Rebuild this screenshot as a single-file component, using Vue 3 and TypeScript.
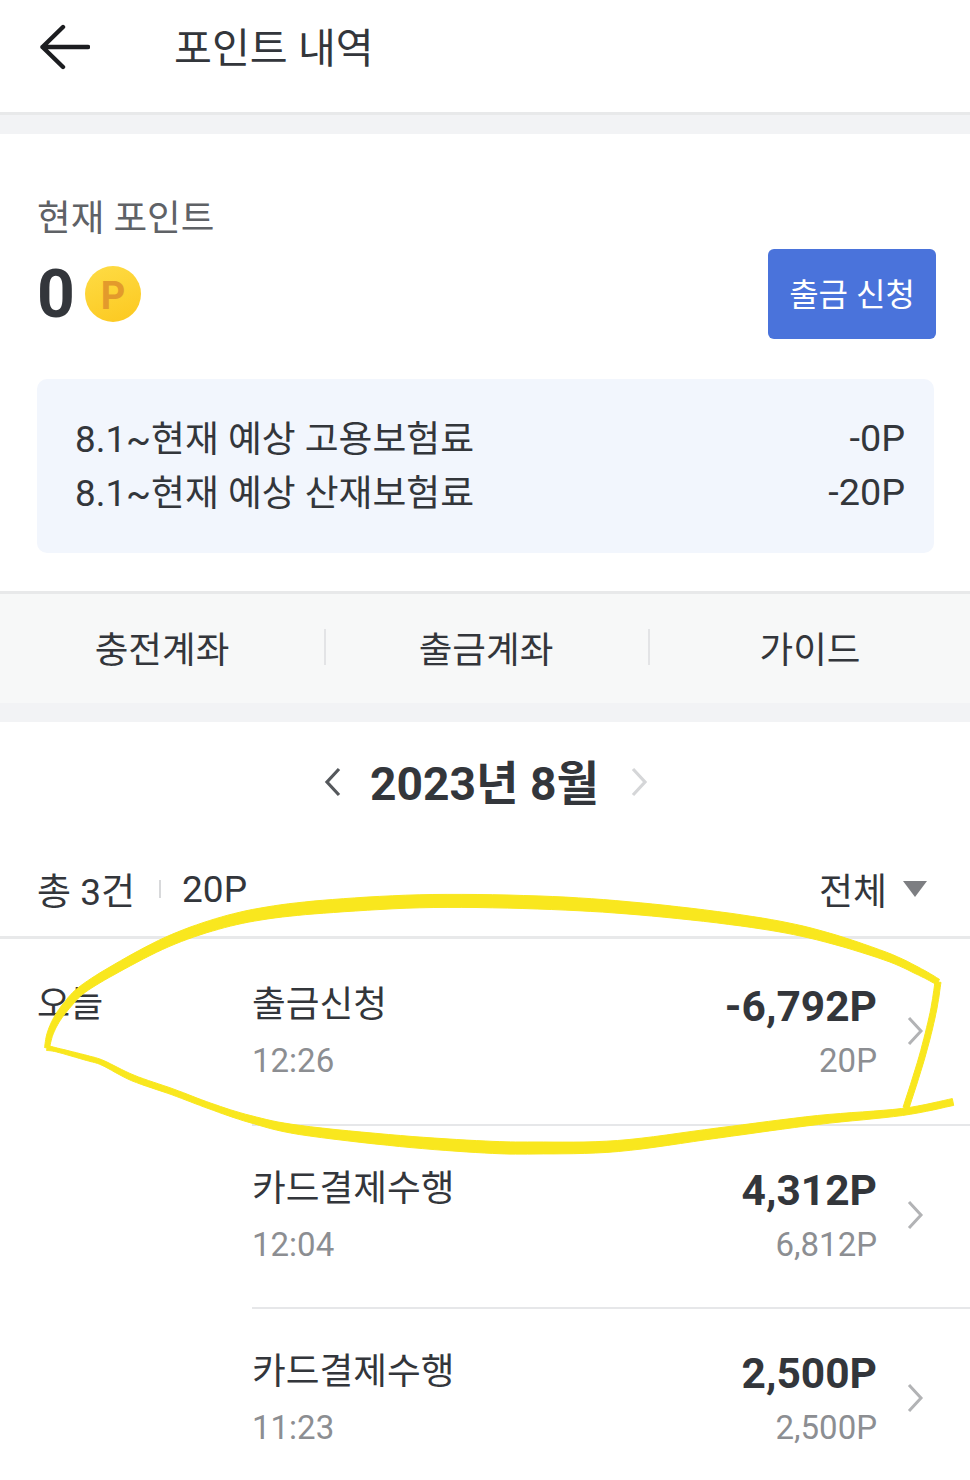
<script setup lang="ts">
import { computed } from 'vue';

interface Tx {
    day: string;
    title: string;
    time: string;
    amount: string;
    balance: string;
}

type Pt = [number, number, number];

const tabs = ['충전계좌', '출금계좌', '가이드'];

const estimates = [
    { label: '8.1~현재 예상 고용보험료', value: '-0P' },
    { label: '8.1~현재 예상 산재보험료', value: '-20P' }
];

const rows: Tx[] = [
    { day: '오늘', title: '출금신청', time: '12:26', amount: '-6,792P', balance: '20P' },
    { day: '', title: '카드결제수행', time: '12:04', amount: '4,312P', balance: '6,812P' },
    { day: '', title: '카드결제수행', time: '11:23', amount: '2,500P', balance: '2,500P' }
];

// pen strokes: x, y, width
const top: Pt[] = [
    [47, 1048, 5], [50, 1034, 6], [57, 1019, 7], [68, 1004, 8], [83, 989, 8], [117, 968, 9], [167, 942, 10],
    [217, 924, 11], [267, 913, 12], [333, 906, 13], [433, 901, 13], [552, 903, 13], [652, 910, 12],
    [752, 922, 11], [818, 935, 10], [885, 956, 8], [920, 972, 7], [938, 982, 6]
];
const side: Pt[] = [
    [938, 982, 6], [933, 1013, 6], [922, 1057, 6], [906, 1108, 6]
];
const bottom: Pt[] = [
    [953, 1102, 7], [902, 1112, 7], [818, 1120, 9], [718, 1133, 10], [618, 1146, 11], [535, 1148, 12],
    [485, 1147, 12], [400, 1141, 11], [300, 1130, 9], [250, 1119, 7], [210, 1106, 6], [173, 1092, 6],
    [133, 1078, 6], [103, 1063, 5], [87, 1058, 5], [57, 1050, 4], [47, 1048, 5]
];

// catmull-rom so the hand-drawn line doesn't look like a polygon
const smooth = (pts: Pt[]): Pt[] => {
    const out: Pt[] = [];
    for (let i = 0; i < pts.length - 1; i++) {
        const p0 = pts[Math.max(i - 1, 0)];
        const p1 = pts[i];
        const p2 = pts[i + 1];
        const p3 = pts[Math.min(i + 2, pts.length - 1)];
        for (let s = 0; s < 8; s++) {
            const t = s / 8;
            const at = (k: number) =>
                0.5 * (2 * p1[k] + (p2[k] - p0[k]) * t + (2 * p0[k] - 5 * p1[k] + 4 * p2[k] - p3[k]) * t * t +
                    (3 * p1[k] - p0[k] - 3 * p2[k] + p3[k]) * t * t * t);
            out.push([at(0), at(1), at(2)]);
        }
    }
    out.push(pts[pts.length - 1]);
    return out;
};

// turn a line with per-point widths into a filled outline
const ribbon = (raw: Pt[]): string => {
    const pts = smooth(raw);
    const left: string[] = [];
    const right: string[] = [];
    pts.forEach(([x, y, w], i) => {
        const a = pts[Math.max(i - 1, 0)];
        const b = pts[Math.min(i + 1, pts.length - 1)];
        const dx = b[0] - a[0];
        const dy = b[1] - a[1];
        const len = Math.hypot(dx, dy) || 1;
        const nx = (-dy / len) * (w / 2);
        const ny = (dx / len) * (w / 2);
        left.push(`${(x + nx).toFixed(1)} ${(y + ny).toFixed(1)}`);
        right.unshift(`${(x - nx).toFixed(1)} ${(y - ny).toFixed(1)}`);
    });
    return `M${left.join('L')}L${right.join('L')}Z`;
};

const marks = computed(() => [ribbon(top), ribbon(side), ribbon(bottom)]);
</script>

<template>
    <div class="page">
        <header class="top-bar">
            <svg class="back" width="50" height="46" viewBox="0 0 50 46" fill="none">
                <path d="M23 3 2.5 23 23 43M2.5 23H48" stroke="#1c1d20" stroke-width="4.4" stroke-linecap="round" stroke-linejoin="round" />
            </svg>
            <h1 class="title">포인트 내역</h1>
        </header>
        <div class="band"></div>

        <section class="balance">
            <div class="balance-main">
                <div class="balance-left">
                    <p class="balance-label">현재 포인트</p>
                    <div class="balance-value">
                        <span class="zero">0</span>
                        <span class="coin">P</span>
                    </div>
                </div>
                <button class="withdraw">출금 신청</button>
            </div>
            <div class="estimate">
                <div v-for="e in estimates" :key="e.label" class="estimate-row">
                    <span>{{ e.label }}</span>
                    <span class="estimate-value">{{ e.value }}</span>
                </div>
            </div>
        </section>

        <nav class="tabs">
            <div v-for="t in tabs" :key="t" class="tab"><span>{{ t }}</span></div>
        </nav>
        <div class="band thin"></div>

        <div class="month">
            <svg width="18" height="32" viewBox="0 0 18 32" fill="none">
                <path d="M15 3 3 16l12 13" stroke="#55585c" stroke-width="3.2" />
            </svg>
            <strong>2023년 8월</strong>
            <svg width="18" height="32" viewBox="0 0 18 32" fill="none">
                <path d="m3 3 12 13L3 29" stroke="#d5d6d8" stroke-width="3.2" />
            </svg>
        </div>

        <div class="summary">
            <div class="summary-left">
                <span>총 3건</span>
                <i class="sep"></i>
                <span>20P</span>
            </div>
            <div class="filter">
                <span>전체</span>
                <i class="caret"></i>
            </div>
        </div>

        <ul class="list">
            <li v-for="r in rows" :key="r.time" class="row">
                <span class="day">{{ r.day }}</span>
                <div class="row-body">
                    <div class="row-text">
                        <span class="row-title">{{ r.title }}</span>
                        <span class="row-time">{{ r.time }}</span>
                    </div>
                    <div class="row-nums">
                        <strong>{{ r.amount }}</strong>
                        <span>{{ r.balance }}</span>
                    </div>
                    <svg class="chev" width="18" height="32" viewBox="0 0 18 32" fill="none">
                        <path d="m3 3 12 13L3 29" stroke="#b2b3b5" stroke-width="3" />
                    </svg>
                </div>
            </li>
        </ul>

        <svg class="pen" width="970" height="1480" viewBox="0 0 970 1480">
            <path v-for="(d, i) in marks" :key="i" :d="d" fill="#f9e71e" stroke="#f9e71e" stroke-width="1" stroke-linejoin="round" />
        </svg>
    </div>
</template>

<style scoped>
.page {
    position: relative;
    width: 970px;
    height: 1480px;
    overflow: hidden;
    background: #fff;
    color: #33363b;
    font-family: Roboto, "Noto Sans CJK KR", sans-serif;
}

.top-bar {
    display: flex;
    align-items: center;
    height: 112px;
    padding: 0 0 18px 40px;
    box-sizing: border-box;
}

.title {
    margin: 0 0 4px 84px;
    font-size: 41.2px;
    font-weight: 400;
}

.band {
    height: 19px;
    border-top: 3px solid #e8e9ea;
    background: #f2f3f5;
}

.band.thin {
    border-top: 0;
}

.balance {
    padding: 65px 36px 38px 37px;
}

.balance-main {
    display: flex;
    justify-content: space-between;
    align-items: flex-end;
    margin-right: -2px;
}

.balance-left {
    padding-bottom: 13px;
}

.balance-label {
    margin: 0;
    font-size: 36.6px;
    line-height: 40px;
    color: #5f6266;
}

.balance-value {
    display: flex;
    align-items: center;
    gap: 10px;
    margin-top: 23px;
    height: 64px;
}

.zero {
    font-size: 66px;
    font-weight: 700;
}

.coin {
    display: flex;
    align-items: center;
    justify-content: center;
    width: 56px;
    height: 56px;
    padding-top: 3px;
    box-sizing: border-box;
    border-radius: 50%;
    background: linear-gradient(160deg, #fedc45, #fcc81f);
    color: #e39a2c;
    font-size: 38px;
    font-weight: 700;
}

.withdraw {
    width: 168px;
    height: 90px;
    padding: 0 0 4px;
    border: 0;
    border-radius: 6px;
    background: #4a73db;
    color: #fff;
    font-family: inherit;
    font-size: 32px;
}

.estimate {
    margin-top: 40px;
    padding: 34px 29px 32px 38px;
    border-radius: 10px;
    background: #f2f6fd;
}

.estimate-row {
    display: flex;
    justify-content: space-between;
    font-size: 36.8px;
    line-height: 54px;
}

.estimate-value {
    margin-top: -2px;
    font-size: 37.8px;
}

.tabs {
    display: flex;
    align-items: center;
    height: 112px;
    padding: 0 0 3px 2px;
    box-sizing: border-box;
    border-top: 3px solid #e8e9ea;
    background: #f7f8f8;
}

.tab {
    flex: 1;
    display: flex;
    justify-content: center;
    align-items: center;
    height: 36px;
    padding-right: 2px;
    font-size: 36.6px;
}

.tab + .tab {
    border-left: 2px solid #e3e4e6;
}

.tab:last-child {
    padding-right: 0;
}

.month {
    display: flex;
    justify-content: center;
    align-items: center;
    gap: 28px;
    height: 120px;
    padding-left: 2px;
}

.month strong {
    margin: 0 3px 6px 0;
    font-size: 46.2px;
    font-weight: 700;
}

.summary {
    display: flex;
    justify-content: space-between;
    align-items: center;
    height: 94px;
    padding: 0 43px 0 37px;
    border-bottom: 3px solid #e8e9ea;
    font-size: 37px;
}

.summary-left,
.filter {
    display: flex;
    align-items: center;
}

.sep {
    width: 2px;
    height: 18px;
    margin: 0 21px 0 24px;
    background: #d8d9db;
}

.caret {
    width: 0;
    height: 0;
    margin-left: 16px;
    border-style: solid;
    border-width: 16px 12px 0;
    border-color: #7d7e82 transparent transparent;
}

.list {
    margin: 0;
    padding: 0;
    list-style: none;
}

.row {
    display: flex;
}

.day {
    width: 215px;
    padding: 46px 0 0 37px;
    flex: none;
    font-size: 36px;
    line-height: 40px;
}

.row-body {
    flex: 1;
    display: flex;
    align-items: center;
    height: 183px;
    padding: 1px 46px 0 0;
    box-sizing: border-box;
    border-bottom: 2px solid #e6e7e9;
}

.row:first-child .row-body {
    height: 187px;
    padding-top: 3px;
}

.row-text,
.row-nums {
    display: flex;
    flex-direction: column;
    gap: 12px;
}

.row-text {
    flex: 1;
}

.row-title {
    font-size: 36.7px;
    line-height: 44px;
}

.row-time {
    font-size: 33px;
    line-height: 44px;
    color: #8c8e92;
}

.row-nums {
    align-items: flex-end;
    gap: 10px;
    color: #8c8e92;
    font-size: 33px;
    line-height: 44px;
}

.row-nums strong {
    margin-top: 2px;
    color: #33363b;
    font-size: 42.5px;
    font-weight: 700;
}

.chev {
    margin: -4px 0 0 29px;
}

.pen {
    position: absolute;
    top: 0;
    left: 0;
    pointer-events: none;
}
</style>
